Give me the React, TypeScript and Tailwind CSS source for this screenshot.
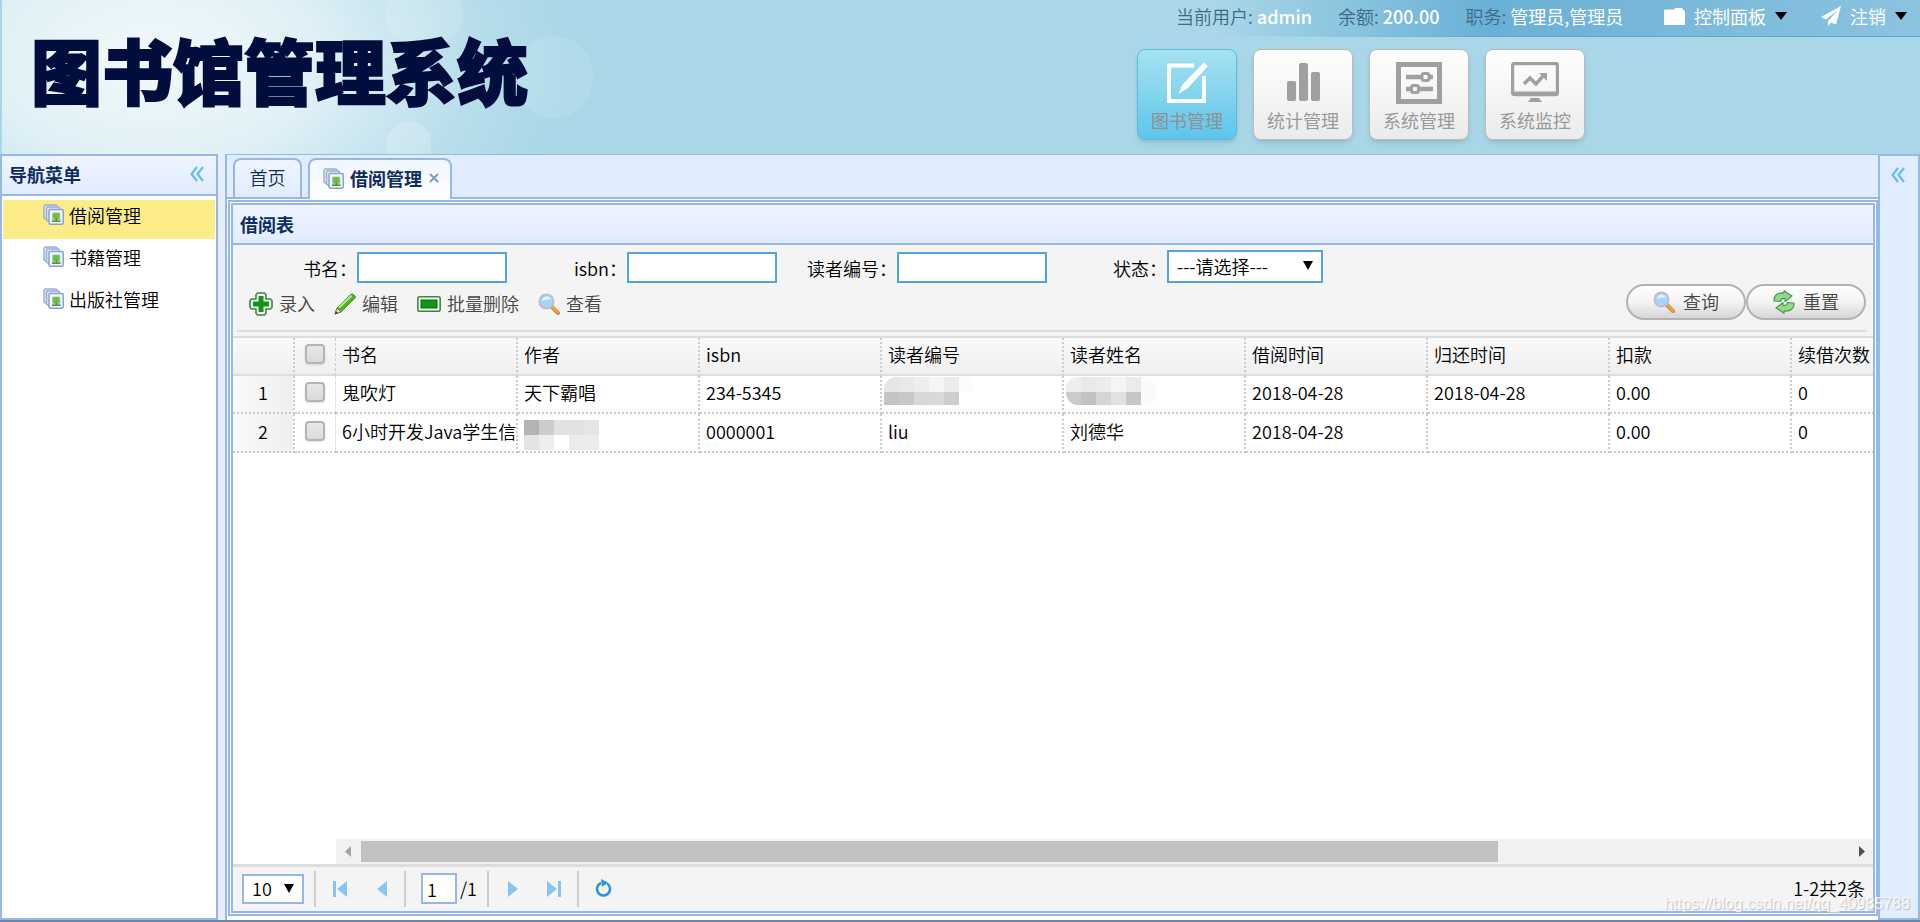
import type { ReactNode } from "react";

type IconProps = { className?: string };

function StackIcon({ className = "" }: IconProps) {
  return (
    <svg viewBox="0 0 21 21" className={`w-[21px] h-[21px] shrink-0 ${className}`}>
      <rect x="1" y="1" width="13" height="14" rx="1.5" fill="#dfe8f5" stroke="#9aaed0" strokeWidth="1.4" />
      <rect x="3.5" y="3" width="13" height="14" rx="1.5" fill="#dfe8f5" stroke="#9aaed0" strokeWidth="1.4" />
      <rect x="6" y="5.5" width="14.2" height="14.7" rx="1.5" fill="#f6f9fc" stroke="#88a2cc" strokeWidth="1.5" />
      <rect x="9" y="8.5" width="8.5" height="9.5" fill="#a9cbea" />
      <path d="M9 16.500h8.500V18H9z" fill="#4a9a2d" />
      <rect x="10" y="9" width="6.5" height="6.500" rx="1.5" fill="#72c030" />
      <path d="M12.700 14.500h1.200v2.500h-1.200z" fill="#8a6a30" />
    </svg>
  );
}

function DoubleChevron() {
  return (
    <svg viewBox="0 0 14 16" className="w-[14px] h-4" fill="none" stroke="#6abaf0" strokeWidth="2.2">
      <path d="M7 1L1.500 8L7 15M13 1L7.500 8L13 15" />
    </svg>
  );
}

function PlusIcon() {
  return (
    <svg viewBox="0 0 24 24" className="w-6 h-6">
      <path d="M8.500 1h7l1.500 1.500V7h4.500L23 8.500v7L21.500 17H17v4.500L15.500 23h-7L7 21.500V17H2.500L1 15.500v-7L2.500 7H7V2.500z" fill="#eef7ee" stroke="#3f8449" strokeWidth="1.6" strokeLinejoin="round" />
      <path d="M9.500 4h5v5.500H20v5h-5.500V20h-5v-5.500H4v-5h5.500z" fill="#149414" />
    </svg>
  );
}

function PencilIcon() {
  return (
    <svg viewBox="0 0 22 22" className="w-[22px] h-[22px]">
      <path d="M1 21l2-6L16 2q2-2 4.500.5T20 6L7 19z" fill="#4fb52c" stroke="#3f8a2a" strokeWidth="1" />
      <path d="M5 14.500L17.500 2.500" stroke="#b6ee8c" strokeWidth="2" />
      <path d="M1 21l2-6l4 4z" fill="#e9d9b0" stroke="#5d7a3a" strokeWidth=".8" />
      <path d="M1 21l1-2.700l1.700 1.700z" fill="#333" />
    </svg>
  );
}

function MinusIcon() {
  return (
    <svg viewBox="0 0 24 16" className="w-6 h-4">
      <rect x=".8" y=".8" width="22.400" height="14.400" rx="2" fill="#eef7ee" stroke="#3f8449" strokeWidth="1.600" />
      <rect x="4" y="4" width="16" height="8" fill="#149414" stroke="#0a6a12" />
    </svg>
  );
}

function SearchIcon() {
  return (
    <svg viewBox="0 0 22 22" className="w-[22px] h-[22px]">
      <path d="M14 14l6 6" stroke="#c98a4c" strokeWidth="4" strokeLinecap="round" />
      <path d="M14.500 14l5.500 5.500" stroke="#f6a23c" strokeWidth="2.400" strokeLinecap="round" />
      <circle cx="8.500" cy="8.500" r="7" fill="#a9d4fa" stroke="#b9c0ce" strokeWidth="2" />
      <path d="M4 8q.5-4 4.500-4.500q3.500 0 4.500 3q-4-1-9 1.500z" fill="#e2f2ff" />
    </svg>
  );
}

function RecycleIcon() {
  return (
    <svg viewBox="0 0 22 24" className="w-[22px] h-6" fill="#8fdc84" stroke="#4a9560" strokeWidth="1.200" strokeLinejoin="round">
      <path d="M1 11Q.5 2.500 11 3V.8L19 6l-7 5.500V8.500q-4-.5-4.500 3z" />
      <path d="M21 13q.5 8.500-10 8v2.200L3 18l7-5.500v3q4 .5 4.500-3z" />
    </svg>
  );
}

function EditSquareIcon() {
  return (
    <svg viewBox="0 0 42 42" className="w-[42px] h-[42px]">
      <path d="M28 3.500H3v35.500h35V14" fill="none" stroke="#fff" strokeWidth="4" />
      <path d="M38 .5l4 3.500L22 26l-9.500 6l4-9.500z" fill="#fff" />
    </svg>
  );
}

function BarsIcon() {
  return (
    <svg viewBox="0 0 42 42" className="w-[42px] h-[42px]" fill="#a0a0a0">
      <rect x="5" y="19" width="9" height="20" rx="2" />
      <rect x="17" y="1" width="9" height="38" rx="2" />
      <rect x="29" y="10" width="9" height="29" rx="2" />
    </svg>
  );
}

function SlidersIcon() {
  return (
    <svg viewBox="0 0 46 42" className="w-[46px] h-[42px]" fill="none" stroke="#a0a0a0">
      <rect x="2.500" y="2.500" width="41" height="37" strokeWidth="5" />
      <path d="M10 15h15M33 15h4M10 27h5M23 27h14" strokeWidth="4.500" />
      <rect x="26" y="11.500" width="7" height="7" rx="2" strokeWidth="3" />
      <rect x="15.500" y="23.500" width="7" height="7" rx="2" strokeWidth="3" />
    </svg>
  );
}

function MonitorIcon() {
  return (
    <svg viewBox="0 0 48 42" className="w-12 h-[42px]" fill="none" stroke="#a0a0a0">
      <rect x="1.500" y="1.500" width="45" height="31" rx="2" strokeWidth="3.400" />
      <path d="M1 31.500h46" strokeWidth="4" />
      <path d="M13 22l6-6l6 6l8-9" strokeWidth="3.400" />
      <path d="M28 11h8v8z" fill="#a0a0a0" stroke="none" />
      <path d="M20 36h8l3 4H17z" fill="#a0a0a0" stroke="none" />
    </svg>
  );
}

function CaretDown() {
  return (
    <svg viewBox="0 0 12 8" className="w-3 h-2"><path d="M0 0h12L6 8z" fill="#000" /></svg>
  );
}

const modules = [
  { label: "图书管理", icon: <EditSquareIcon />, active: true },
  { label: "统计管理", icon: <BarsIcon /> },
  { label: "系统管理", icon: <SlidersIcon /> },
  { label: "系统监控", icon: <MonitorIcon /> },
];

const columns = ["书名", "作者", "isbn", "读者编号", "读者姓名", "借阅时间", "归还时间", "扣款", "续借次数"];

const MASK_ID = [
  ["#e6e6e6", "#e9e9e9", "#eeeeee", "#f5f5f5", "#ebebeb", "#fcfcfc"],
  ["#c4c4c4", "#c8c8c8", "#d7d7d7", "#d9d9d9", "#cdcdcd", "#ffffff"],
];
const MASK_NAME = [
  ["#eeeeee", "#e9e9e9", "#ececec", "#f5f5f5", "#ebebeb", "#fafafa"],
  ["#cbcbcb", "#c2c2c2", "#d5d5d5", "#e1e1e1", "#c6c6c6", "#fafafa"],
];
const MASK_AUTHOR = [
  ["#b3b3b3", "#cccccc", "#e2e2e2", "#e2e2e2", "#e5e5e5", "#ffffff"],
  ["#e3e3e3", "#eeeeee", "#ffffff", "#ebebeb", "#ececec", "#ffffff"],
];

function Mask({ colors, className }: { colors: string[][]; className: string }) {
  return (
    <span className={`block w-[90px] overflow-hidden ${className}`}>
      {colors.map((row, y) => (
        <span key={y} className="flex">
          {row.map((c, x) => (
            <span key={x} className="w-[15px] h-[15px]" style={{ backgroundColor: c }} />
          ))}
        </span>
      ))}
    </span>
  );
}

const rows: ReactNode[][] = [
  [
    "鬼吹灯",
    "天下霸唱",
    "234-5345",
    <Mask colors={MASK_ID} className="h-[28px] -ml-1 mb-[3px] rounded-tl-xl" />,
    <Mask colors={MASK_NAME} className="h-[28px] -ml-1 mb-[3px] rounded-xl" />,
    "2018-04-28",
    "2018-04-28",
    "0.00",
    "0",
  ],
  [
    "6小时开发Java学生信",
    <Mask colors={MASK_AUTHOR} className="h-[30px] mt-1.5 -mb-[3px]" />,
    "0000001",
    "liu",
    "刘德华",
    "2018-04-28",
    "",
    "0.00",
    "0",
  ],
];

function CheckBox({ label }: { label: string }) {
  return (
    <input
      type="checkbox"
      aria-label={label}
      className="block mx-auto appearance-none w-5 h-5 rounded border-2 border-[#b4b4b4] bg-linear-to-b from-[#e8e8e8] to-[#dadada] shadow-sm"
    />
  );
}

function Field({ id, label }: { id: string; label: string }) {
  return (
    <div className="flex items-center">
      <label htmlFor={id} className="w-[120px] text-right">{label}</label>
      <input id={id} className="w-[150px] h-[31px] px-1 bg-white border-2 border-[#54a4da] outline-none" />
    </div>
  );
}

function ToolButton({ icon, label }: { icon: ReactNode; label: string }) {
  return (
    <button className="flex items-center gap-1.5 text-[#444]">
      {icon}
      <span className="pb-0.5">{label}</span>
    </button>
  );
}

function PillButton({ icon, label }: { icon: ReactNode; label: string }) {
  return (
    <button className="flex items-center justify-center gap-2 w-[120px] h-9 rounded-full border-2 border-[#b3b3b3] bg-linear-to-b from-white via-[#f4f4f4] to-[#d6d6d6] text-[#444]">
      {icon}
      <span className="pb-0.5">{label}</span>
    </button>
  );
}

function Separator() {
  return <div className="w-0.5 h-9 bg-[#ccc]" />;
}

function Header() {
  return (
    <header className="relative h-[154px] shrink-0 flex justify-between bg-[#a9d7e8] overflow-hidden">
      <div className="absolute inset-y-0 left-0.5 w-[640px] bg-[radial-gradient(ellipse_420px_260px_at_150px_60px,#f2f9fb_0%,#dff0f6_40%,#b9deeb_76%,#a9d7e8_100%)]" />
      <div className="absolute left-[385px] -top-4 w-[78px] h-[60px] rounded-full bg-white/15" />
      <div className="absolute left-[387px] top-[121px] w-11 h-14 rounded-full bg-white/20" />
      <div className="absolute left-[515px] top-9 w-[78px] h-[82px] rounded-full bg-white/10" />
      <h1 className="relative pl-[31px] pt-[18px] text-[71px] leading-[100px] font-black text-[#010d3c] whitespace-nowrap [-webkit-text-stroke:2px_#010d3c]">
        图书馆管理系统
      </h1>
      <div className="relative w-[783px] shrink-0">
        <div className="flex items-center h-9 pl-[39px] pr-[13px] pb-1 whitespace-nowrap text-[#3c6a84] bg-linear-to-r from-transparent from-10% via-[#6ab0d6] via-45% to-[#8cc3e0]">
          <span>当前用户: <b className="font-medium text-white">admin</b></span>
          <span className="ml-[26px]">余额: <b className="font-medium text-white">200.00</b></span>
          <span className="ml-[26px]">职务: <b className="font-normal text-white">管理员,管理员</b></span>
          <button className="ml-auto flex items-center gap-[9px] font-normal text-white">
            <svg viewBox="0 0 21 17" className="w-[21px] h-[17px]" fill="#fff"><path d="M0 3q0-1.500 1-1.500h9L11.500 0H18l2 2.500q1 0 1 1V16q0 1-1 1H1q-1 0-1-1z" /></svg>
            控制面板
            <CaretDown />
          </button>
          <button className="ml-[34px] flex items-center gap-[9px] font-normal text-white">
            <svg viewBox="0 0 20 20" className="w-5 h-5" fill="#fff"><path d="M20 0L0 11l5 2.500L17 4L7 15v5l3-3.500l5 2z" /></svg>
            注销
            <CaretDown />
          </button>
        </div>
        <div className="h-px bg-linear-to-r from-transparent from-15% to-[#5ba7d3] to-45%" />
        <nav className="flex gap-4 mt-3">
          {modules.map((m) => (
            <button
              key={m.label}
              className={
                m.active
                  ? "flex flex-col items-center w-[100px] h-[91px] pt-3 rounded-lg border border-[#5fb9dc] bg-linear-to-b from-[#a5e2f0] to-[#5cc5ec] shadow-md font-normal text-[#8f8f8f]"
                  : "flex flex-col items-center w-[100px] h-[91px] pt-3 rounded-lg border border-[#bbb] bg-linear-to-b from-white to-[#ebebeb] shadow-md font-normal text-[#999]"
              }
            >
              {m.icon}
              <span className="leading-8">{m.label}</span>
            </button>
          ))}
        </nav>
      </div>
    </header>
  );
}

function Sidebar() {
  return (
    <aside className="w-[218px] shrink-0 border-2 border-[#95b8e7] bg-white">
      <div className="flex items-center justify-between h-10 pl-[7px] pr-3 pb-0.5 border-b-2 border-[#95b8e7] bg-linear-to-b from-[#eff5ff] to-[#e0ecff]">
        <h2 className="font-bold text-[#0e2d5f]">导航菜单</h2>
        <button aria-label="折叠"><DoubleChevron /></button>
      </div>
      <ul className="pt-1 px-px">
        {["借阅管理", "书籍管理", "出版社管理"].map((name, i) => (
          <li key={name} className="h-[42px]">
            <a href="#" className={`flex items-center h-[39px] pl-10 gap-[5px] pb-2.5 ${i === 0 ? "bg-[#fbec88]" : ""}`}>
              <StackIcon />
              {name}
            </a>
          </li>
        ))}
      </ul>
    </aside>
  );
}

function SearchForm() {
  return (
    <div className="bg-[#f4f4f4] h-[91px] pl-1 pr-1.5">
      <div className="h-[87px] border-b-2 border-[#ddd]">
        <div className="flex items-end pb-px h-[39px]">
          <Field id="book" label="书名：" />
          <Field id="isbn" label="isbn：" />
          <Field id="reader" label="读者编号：" />
          <label htmlFor="state" className="w-[120px] pb-[3px] text-right">状态：</label>
          <div className="relative">
            <select id="state" className="appearance-none w-[156px] h-[33px] pl-2 pb-0.5 bg-white border-2 border-[#54a4da] outline-none">
              <option>---请选择---</option>
            </select>
            <span className="absolute right-2.5 top-[11px] pointer-events-none">
              <svg viewBox="0 0 10 9" className="w-[10px] h-[9px]"><path d="M0 0h10L5 9z" /></svg>
            </span>
          </div>
        </div>
        <div className="flex items-center justify-between">
          <div className="flex items-center gap-[19px] pl-3 pt-1">
            <ToolButton icon={<PlusIcon />} label="录入" />
            <ToolButton icon={<PencilIcon />} label="编辑" />
            <ToolButton icon={<MinusIcon />} label="批量删除" />
            <ToolButton icon={<SearchIcon />} label="查看" />
          </div>
          <div className="flex pr-px">
            <PillButton icon={<SearchIcon />} label="查询" />
            <PillButton icon={<RecycleIcon />} label="重置" />
          </div>
        </div>
      </div>
    </div>
  );
}

function Grid() {
  return (
    <div className="flex-1 min-h-0 overflow-hidden border-t-2 border-[#ddd]">
      <table className="table-fixed border-separate border-spacing-0 w-[1741px]">
        <colgroup>
          <col className="w-[62px]" />
          <col className="w-[41px]" />
          {columns.map((c) => <col key={c} className="w-[182px]" />)}
        </colgroup>
        <thead>
          <tr className="h-[38px] bg-linear-to-b from-[#f9f9f9] to-[#efefef]">
            <th className="border-b-2 border-b-[#ddd] border-r-2 border-r-[#ccc] [border-right-style:dotted]" />
            <th className="p-0 pb-1 border-b-2 border-b-[#ddd] border-r border-r-[#ccc] [border-right-style:dashed]"><CheckBox label="全选" /></th>
            {columns.map((c) => (
              <th key={c} className="p-0 pl-1.5 pb-1 text-left font-[350] whitespace-nowrap border-b-2 border-b-[#ddd] border-r-2 border-r-[#ccc] [border-right-style:dotted]">{c}</th>
            ))}
          </tr>
        </thead>
        <tbody>
          {rows.map((cells, r) => (
            <tr key={r} className="h-[38px]">
              <td className="p-0 pb-1 text-center border-b-2 border-r-2 border-dotted border-[#ccc] bg-linear-to-r from-[#f9f9f9] to-[#efefef]">{r + 1}</td>
              <td className="p-0 pb-1 border-b-2 border-r border-dotted border-[#ccc]"><CheckBox label={`第${r + 1}行`} /></td>
              {cells.map((cell, c) => (
                <td key={c} className="p-0 pl-1.5 pb-1 whitespace-nowrap border-b-2 border-r-2 border-dotted border-[#ccc]">{cell}</td>
              ))}
            </tr>
          ))}
        </tbody>
      </table>
    </div>
  );
}

function Pager() {
  return (
    <footer className="flex items-center h-[47px] pl-[9px] pr-2 pb-px border-t-3 border-[#ddd] bg-[#f4f4f4]">
      <div className="relative">
        <select aria-label="每页条数" className="appearance-none w-[62px] h-[30px] pl-2 pb-0.5 bg-white border-2 border-[#95b8e7] outline-none">
          <option>10</option>
        </select>
        <span className="absolute right-2.5 top-[10px] pointer-events-none">
          <svg viewBox="0 0 10 9" className="w-[10px] h-[9px]"><path d="M0 0h10L5 9z" /></svg>
        </span>
      </div>
      <div className="w-[10px]" />
      <Separator />
      <div className="flex items-center justify-between w-[88px] px-[17px]">
        <button aria-label="首页"><svg viewBox="0 0 14 16" className="w-[14px] h-4" fill="#87c4f0"><path d="M0 0h3v16H0zM14 0v16L4 8z" /></svg></button>
        <button aria-label="上一页"><svg viewBox="0 0 10 16" className="w-[10px] h-4" fill="#87c4f0"><path d="M10 0v16L0 8z" /></svg></button>
      </div>
      <Separator />
      <div className="flex items-center w-[81px] pl-[15px] gap-[3px]">
        <input aria-label="页码" defaultValue="1" className="w-9 h-[31px] px-1 bg-white border-2 border-[#95b8e7] outline-none" />
        <span className="pb-0.5">/1</span>
      </div>
      <Separator />
      <div className="flex items-center justify-between w-[88px] pl-[19px] pr-4">
        <button aria-label="下一页"><svg viewBox="0 0 10 16" className="w-[10px] h-4" fill="#87c4f0"><path d="M0 0v16L10 8z" /></svg></button>
        <button aria-label="末页"><svg viewBox="0 0 14 16" className="w-[14px] h-4" fill="#87c4f0"><path d="M11 0h3v16h-3zM0 0v16L10 8z" /></svg></button>
      </div>
      <Separator />
      <button aria-label="刷新" className="ml-4 pb-0.5">
        <svg viewBox="0 0 17 18" className="w-[17px] h-[18px]">
          <path d="M12 4.500a6.500 6.500 0 1 1-6-.5" fill="none" stroke="#2f93dc" strokeWidth="2.600" />
          <path d="M6 0l7 3.500L7 8z" fill="#2f93dc" />
        </svg>
      </button>
      <span className="ml-auto pb-0.5">1-2共2条</span>
    </footer>
  );
}

export default function App() {
  return (
    <div className="relative h-screen flex flex-col overflow-hidden bg-[#e6eef8] text-black text-[18px] leading-6 font-[350] font-['Noto_Sans_CJK_SC',sans-serif]">
      <Header />
      <div className="flex-1 min-h-0 flex">
        <Sidebar />
        <main className="flex-1 min-w-0 ml-[7px] flex flex-col border-l-2 border-[#95b8e7] bg-white">
          <div className="flex items-end h-[45px] pl-1.5 gap-1.5 border-t border-b-2 border-[#95b8e7] bg-[#e0ecff]">
            <button className="h-[39px] w-[69px] pb-[3px] rounded-t-lg border-2 border-b-0 border-[#95b8e7] bg-linear-to-b from-[#eff5ff] to-[#e0ecff] text-[#0e2d5f]">首页</button>
            <div className="flex items-center justify-center h-[41px] -mb-0.5 w-36 pb-[3px] pl-0.5 rounded-t-lg border-2 border-b-0 border-[#95b8e7] bg-linear-to-b from-[#eff5ff] to-white text-[#0e2d5f]">
              <StackIcon className="mr-1.5" />
              <span className="font-bold">借阅管理</span>
              <button aria-label="关闭" className="ml-[7px]">
                <svg viewBox="0 0 10 10" className="w-[10px] h-[10px]" stroke="#7f9cc9" strokeWidth="2"><path d="M1 1l8 8M9 1l-8 8" /></svg>
              </button>
            </div>
          </div>
          <div className="flex-1 min-h-0 ml-px mt-px mb-1 p-px flex border-2 border-[#95b8e7]">
            <section className="flex-1 min-w-0 flex flex-col border-2 border-[#95b8e7]">
              <h2 className="h-10 shrink-0 pl-[7px] pt-[7px] border-b-2 border-[#95b8e7] bg-linear-to-b from-[#eff5ff] to-[#e0ecff] font-bold text-[#0e2d5f]">借阅表</h2>
              <SearchForm />
              <Grid />
              <div className="flex items-center h-[25px] shrink-0 ml-[103px] bg-[#f1f1f1]">
                <svg viewBox="0 0 6 11" className="w-1.5 h-[11px] ml-[9px] mr-[10px]"><path d="M6 0v11L0 5.500z" fill="#a3a3a3" /></svg>
                <div className="w-[74%] h-[21px] bg-[#c1c1c1]" />
                <svg viewBox="0 0 6 11" className="w-1.5 h-[11px] ml-auto mr-2"><path d="M0 0v11l6-5.500z" fill="#505050" /></svg>
              </div>
              <Pager />
            </section>
          </div>
        </main>
        <aside className="w-[42px] shrink-0 pt-[11px] pl-[11px] border-2 border-[#95b8e7] bg-[#e0ecff]">
          <button aria-label="展开" className="flex"><DoubleChevron /></button>
        </aside>
      </div>
      <div className="h-0.5 shrink-0 bg-[#6b84a8]" />
      <span className="absolute right-2.5 bottom-1.5 text-[16px] text-white/80 font-['Liberation_Sans',sans-serif] [text-shadow:1px_1px_1px_#bbb]">
        https://blog.csdn.net/qq_40985788
      </span>
    </div>
  );
}
